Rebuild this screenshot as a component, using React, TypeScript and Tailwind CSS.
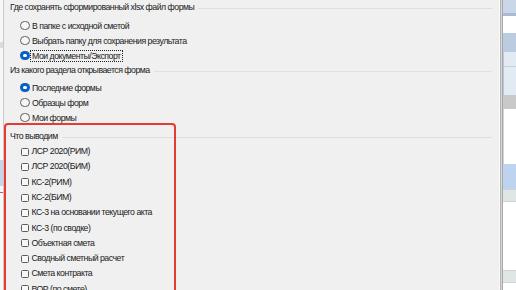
import React from "react";

const font = { fontFamily: '"Liberation Sans", Arial, sans-serif' };

const Heading = ({ text, line = "bg-[#dedede]" }: { text: string; line?: string }) => (
  <div className="h-[14px] flex items-center">
    <span className="whitespace-nowrap">{text}</span>
    <div className={`flex-1 h-px ml-[4px] ${line}`} />
  </div>
);

const Radio = ({ label, checked, focus }: { label: string; checked?: boolean; focus?: boolean }) => (
  <div className="h-[15px] flex items-center pl-[10px]">
    {checked ? (
      <span className="w-[9.5px] h-[9.5px] rounded-full bg-[#0a5fc4] flex items-center justify-center">
        <span className="w-[3.5px] h-[3.5px] rounded-full bg-white" />
      </span>
    ) : (
      <span className="w-[9.5px] h-[9.5px] rounded-full border border-[#5e5e5e] bg-[#f6f6f6]" />
    )}
    <span
      className={`ml-[0.5px] whitespace-nowrap px-[1px] leading-[10px] ${
        focus ? "border border-dotted border-[#222]" : "border border-transparent"
      }`}
    >
      {label}
    </span>
  </div>
);

const Check = ({ label }: { label: string }) => (
  <div className="h-[15.3px] flex items-center pl-[10.5px]">
    <span className="w-[8px] h-[8px] rounded-[1.5px] border border-[#5c5c5c] bg-[#f7f7f7]" />
    <span className="ml-[3px] whitespace-nowrap">{label}</span>
  </div>
);

const outputs = [
  "ЛСР 2020(РИМ)",
  "ЛСР 2020(БИМ)",
  "КС-2(РИМ)",
  "КС-2(БИМ)",
  "КС-3 на основании текущего акта",
  "КС-3 (по сводке)",
  "Объектная смета",
  "Сводный сметный расчет",
  "Смета контракта",
  "ВОР (по смете)",
];

export default function App() {
  return (
    <div
      className="w-[516px] h-[290px] overflow-hidden flex text-[8.75px] tracking-[-0.5px] text-[#1a1a1a] relative"
      style={font}
    >
      {/* window behind, left */}
      <div className="w-[4px] h-full bg-[#f7f7f7] border-r border-[#c9c9c9] flex flex-col">
        <div className="h-[42px]" />
        <div className="h-[6px] bg-[#d8dde3]" />
        <div className="h-[112px]" />
        <div className="h-[26px] bg-[#c6d5ea]" />
        <div className="h-[6px]" />
        <div className="h-px bg-[#e35050]" />
      </div>

      {/* dialog */}
      <div className="flex-1 h-full bg-[#f0f0f0] pl-[6px] pr-[7px] pt-[1px]">
        <Heading text="Где сохранять сформированный xlsx файл формы" />
        <div className="mt-[3px]">
          <Radio label="В папке с исходной сметой" />
          <Radio label="Выбрать папку для сохранения результата" />
          <Radio label="Мои документы/Экспорт" checked focus />
        </div>
        <div className="mt-[1px]">
          <Heading text="Из какого раздела открывается форма" line="bg-[#dbe2ea]" />
        </div>
        <div className="mt-[2px]">
          <Radio label="Последние формы" checked />
          <Radio label="Образцы форм" />
          <Radio label="Мои формы" />
        </div>
        <div className="mt-[5px]">
          <Heading text="Что выводим" />
        </div>
        <div>
          {outputs.map((o) => (
            <Check key={o} label={o} />
          ))}
        </div>
      </div>

      {/* dialog border */}
      <div className="w-[4px] h-full flex">
        <div className="w-px bg-[#fafafa]" />
        <div className="w-px bg-[#b4b4b4]" />
        <div className="w-px bg-[#d6d6d6]" />
        <div className="w-px bg-[#a8a8a8]" />
      </div>

      {/* window behind, right */}
      <div className="w-[13px] h-full flex flex-col bg-white">
        <div className="h-[13px] bg-[#c9d7e8]" />
        <div className="h-[3px] bg-[#a8bbd2]" />
        <div className="h-[17px] bg-white" />
        <div className="h-[19px] bg-[#bccce0]" />
        <div className="h-[43px] bg-[#e2eaf3] border-l border-[#b9c7d8] flex flex-col">
          <div className="h-[15px] border-b border-[#c3d0de]" />
        </div>
        <div className="h-[14px] bg-[#c9c9c9]" />
        <div className="h-[55px] bg-white border-l border-[#d4d4d4]" />
        <div className="h-[25px] bg-[#bdd3ef]" />
        <div className="h-[13px] bg-[#dfe6e5] border-y border-[#cdd5d4]" />
        <div className="h-[68px] bg-white" />
        <div className="h-[13px] bg-[#dfe6e5] border-y border-[#cdd5d4]" />
        <div className="flex-1 bg-white" />
      </div>

      {/* red annotation frame */}
      <div className="absolute left-[4px] top-[123px] w-[172px] h-[180px] border-2 border-[#e63a35] rounded-[4px]" />
    </div>
  );
}
